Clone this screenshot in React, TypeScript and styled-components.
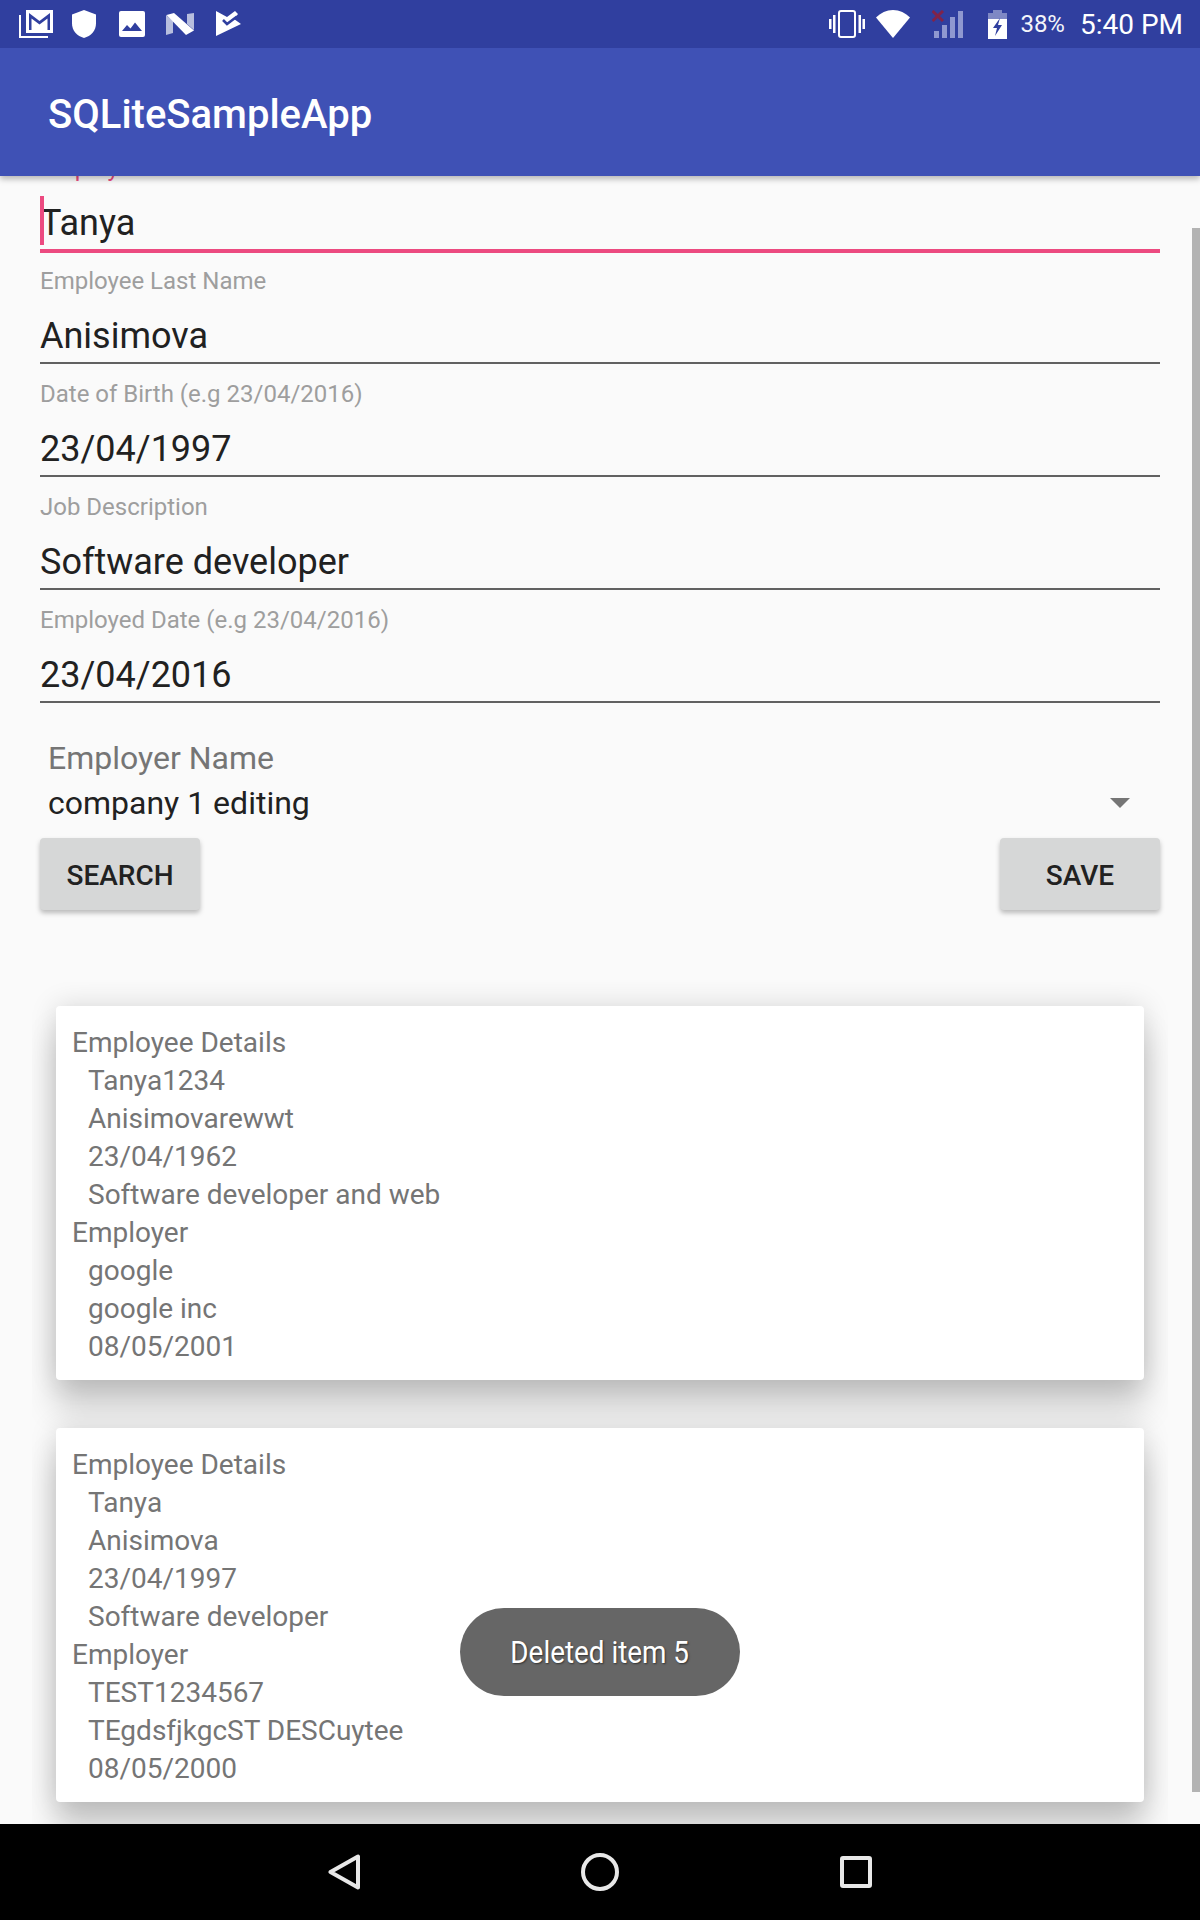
import React from 'react';
import styled, { createGlobalStyle } from 'styled-components';

const GlobalStyle = createGlobalStyle`
  html, body {
    margin: 0;
    padding: 0;
    background: #000;
  }
  * {
    box-sizing: border-box;
  }
`;

const Screen = styled.div`
  width: 1200px;
  height: 1920px;
  display: flex;
  flex-direction: column;
  overflow: hidden;
  font-family: Roboto, "Noto Sans", sans-serif;
  background: #fafafa;
`;

const StatusBar = styled.div`
  flex: 0 0 48px;
  height: 48px;
  display: flex;
  align-items: center;
  justify-content: space-between;
  padding-right: 17px;
  background: #303f9f;
  color: #fff;
  position: relative;
  z-index: 3;
`;

const StatusGroup = styled.div`
  display: flex;
  align-items: center;
`;

const Glyph = styled.svg<{ $left: number }>`
  display: block;
  flex: none;
  margin-left: ${props => props.$left}px;
`;

const BatteryText = styled.span`
  margin-left: 13px;
  font-size: 24px;
  line-height: 48px;
  opacity: 0.95;
`;

const Clock = styled.span`
  margin-left: 15px;
  padding-top: 2px;
  font-size: 28px;
  line-height: 48px;
`;

const AppBar = styled.header`
  flex: 0 0 128px;
  height: 128px;
  display: flex;
  align-items: center;
  padding: 5px 0 0 48px;
  background: #3f51b5;
  box-shadow: 0 3px 6px rgba(0, 0, 0, 0.28);
  position: relative;
  z-index: 2;
`;

const AppTitle = styled.h1`
  margin: 0;
  font-size: 40px;
  font-weight: 500;
  color: #fff;
`;

const ScrollArea = styled.main`
  flex: 1;
  position: relative;
  overflow: hidden;
  background: #fafafa;
`;

const Form = styled.div`
  margin-top: -24px;
  padding: 0 40px;
`;

const Field = styled.div`
  height: 113px;
  display: flex;
  flex-direction: column;
`;

const FieldLabel = styled.label<{ $focused?: boolean }>`
  height: 32px;
  line-height: 32px;
  font-size: 24px;
  color: ${props => (props.$focused ? '#ec4a80' : '#9e9e9e')};
`;

const FieldValue = styled.div`
  height: 54px;
  margin-top: 11px;
  line-height: 56px;
  font-size: 36px;
  color: #212121;
  position: relative;
`;

const Cursor = styled.span`
  position: absolute;
  left: 0;
  top: 1px;
  width: 4px;
  height: 49px;
  background: #ec4a80;
`;

const Underline = styled.div<{ $focused?: boolean }>`
  height: ${props => (props.$focused ? 4 : 2)}px;
  background: ${props => (props.$focused ? '#ec4a80' : '#616161')};
`;

const Spinner = styled.div`
  margin-top: 21px;
  padding: 0 30px 0 8px;
  position: relative;
`;

const SpinnerLabel = styled.div`
  height: 40px;
  line-height: 40px;
  font-size: 32px;
  color: #757575;
`;

const SpinnerValue = styled.div`
  height: 40px;
  margin-top: 5px;
  line-height: 40px;
  font-size: 32px;
  color: #212121;
`;

const Caret = styled.span`
  position: absolute;
  right: 30px;
  bottom: 15px;
  width: 0;
  height: 0;
  border-left: 10px solid transparent;
  border-right: 10px solid transparent;
  border-top: 10px solid #757575;
`;

const ButtonRow = styled.div`
  display: flex;
  justify-content: space-between;
  margin-top: 15px;
`;

const RaisedButton = styled.button`
  width: 160px;
  height: 72px;
  padding: 2px 0 0;
  border: none;
  border-radius: 4px;
  background: #d6d7d7;
  box-shadow: 0 3px 5px rgba(0, 0, 0, 0.26);
  font-family: inherit;
  font-size: 28px;
  font-weight: 500;
  color: #212121;
`;

const CardList = styled.div`
  margin: 72px 32px 0;
  padding: 24px 24px 0;
  height: 900px;
  overflow: hidden;
  display: flex;
  flex-direction: column;
  gap: 48px;
`;

const Card = styled.article`
  flex: none;
  height: 374px;
  padding: 16px;
  background: #fff;
  border-radius: 4px;
  box-shadow: 0 28px 32px rgba(0, 0, 0, 0.19), 0 0 28px rgba(0, 0, 0, 0.14);
`;

const CardLine = styled.div<{ $indent?: boolean }>`
  height: 38px;
  line-height: 42px;
  padding-left: ${props => (props.$indent ? 16 : 0)}px;
  font-size: 28px;
  color: #757575;
`;

const ScrollThumb = styled.div`
  position: absolute;
  top: 52px;
  right: 0;
  width: 8px;
  height: 1564px;
  background: #b3b3b3;
`;

const Toast = styled.div`
  position: absolute;
  left: 460px;
  top: 1432px;
  width: 280px;
  height: 88px;
  display: flex;
  align-items: center;
  justify-content: center;
  border-radius: 44px;
  background: #666;
  color: #fff;
  font-size: 32px;
`;

const ToastText = styled.span`
  display: inline-block;
  transform: scaleX(0.87);
  white-space: nowrap;
  text-shadow: 1px 1px 2px rgba(0, 0, 0, 0.5);
`;

const NavBar = styled.nav`
  flex: 0 0 96px;
  height: 96px;
  display: flex;
  align-items: center;
  justify-content: center;
  background: #000;
  position: relative;
  z-index: 3;
`;

const NavGlyph = styled.svg<{ $left: number }>`
  display: block;
  flex: none;
  margin-left: ${props => props.$left}px;
`;

const employees = [
  {
    details: ['Tanya1234', 'Anisimovarewwt', '23/04/1962', 'Software developer and web'],
    employer: ['google', 'google inc', '08/05/2001'],
  },
  {
    details: ['Tanya', 'Anisimova', '23/04/1997', 'Software developer'],
    employer: ['TEST1234567', 'TEgdsfjkgcST DESCuytee', '08/05/2000'],
  },
];

const fields = [
  { label: 'Employee First Name', value: 'Tanya', focused: true },
  { label: 'Employee Last Name', value: 'Anisimova' },
  { label: 'Date of Birth (e.g 23/04/2016)', value: '23/04/1997' },
  { label: 'Job Description', value: 'Software developer' },
  { label: 'Employed Date (e.g 23/04/2016)', value: '23/04/2016' },
];

const App: React.FC = () => {
  return (
    <Screen>
      <GlobalStyle />
      <StatusBar>
        <StatusGroup>
          {/* mail stack */}
          <Glyph $left={19} width="34" height="28" viewBox="0 0 34 28">
            <path d="M1 5v22h28" fill="none" stroke="#fff" strokeWidth="2" />
            <path d="M7 0h27v23H7z" fill="#fff" />
            <path d="M10 3l10.500 8L31 3v17h-2.500V8.500l-8 6-8-6V20H10z" fill="#303f9f" />
          </Glyph>
          {/* shield */}
          <Glyph $left={19} width="24" height="28" viewBox="0 0 24 28">
            <path d="M12 0L0 4.500v9C0 20.500 5 26 12 28c7-2 12-7.500 12-14.500v-9z" fill="#fff" />
          </Glyph>
          {/* picture */}
          <Glyph $left={23} width="26" height="26" viewBox="0 0 26 26">
            <rect width="26" height="26" rx="2" fill="#fff" />
            <path d="M3 20l5-6 3.500 3.500L16 11.500 23 20z" fill="#303f9f" />
          </Glyph>
          {/* N */}
          <Glyph $left={21} width="28" height="22" viewBox="0 0 28 22">
            <path d="M0 2v20l7-2V8zM21 1l7-1v17l-7-6z" fill="#b7bede" />
            <path d="M0.500 2L8 0l20 17.500L20 22z" fill="#fff" />
          </Glyph>
          {/* check tag */}
          <Glyph $left={22} width="25" height="26" viewBox="0 0 25 26">
            <path d="M0 0l11 6 8-6 3 3-4 5 7 5L0 25z" fill="#fff" />
            <path d="M7 9l4 4 10-7.500" fill="none" stroke="#303f9f" strokeWidth="2.500" />
          </Glyph>
        </StatusGroup>
        <StatusGroup>
          {/* vibrate */}
          <Glyph $left={0} width="36" height="28" viewBox="0 0 36 28">
            <rect x="10" y="1" width="16" height="26" rx="2" fill="none" stroke="#fff" strokeWidth="2" />
            <path d="M0 9h2.500v10H0zM4 5h2.500v18H4zM33.500 9H36v10h-2.500zM29.500 5H32v18h-2.500z" fill="#fff" />
          </Glyph>
          {/* wifi */}
          <Glyph $left={11} width="34" height="28" viewBox="0 0 34 28">
            <path d="M17 28L0 7.500C4.500 3 10.500 0 17 0s12.500 3 17 7.500z" fill="#fff" />
          </Glyph>
          {/* signal with red cross */}
          <Glyph $left={22} width="31" height="29" viewBox="0 0 31 29">
            <path d="M2 21h5v7H2zM10 15h5v13h-5zM18 7h5v21h-5zM26 1h5v27h-5z" fill="#8f98d0" />
            <path d="M0.500 1l10.500 10M11 1L0.500 11" stroke="#80234a" strokeWidth="3" />
          </Glyph>
          {/* charging battery */}
          <Glyph $left={25} width="19" height="29" viewBox="0 0 19 29">
            <path d="M5 0h9v3h5v6H0V3h5z" fill="#7e88c4" />
            <path d="M0 9h19v20H0z" fill="#fff" />
            <path d="M12 8L5 18h4l-2 8 7-11h-4z" fill="#303f9f" />
          </Glyph>
          <BatteryText>38%</BatteryText>
          <Clock>5:40 PM</Clock>
        </StatusGroup>
      </StatusBar>

      <AppBar>
        <AppTitle>SQLiteSampleApp</AppTitle>
      </AppBar>

      <ScrollArea>
        <Form>
          {fields.map(field => (
            <Field key={field.label}>
              <FieldLabel $focused={field.focused}>{field.label}</FieldLabel>
              <FieldValue>
                {field.focused && <Cursor />}
                {field.value}
              </FieldValue>
              <Underline $focused={field.focused} />
            </Field>
          ))}
          <Spinner>
            <SpinnerLabel>Employer Name</SpinnerLabel>
            <SpinnerValue>company 1 editing</SpinnerValue>
            <Caret />
          </Spinner>
          <ButtonRow>
            <RaisedButton>SEARCH</RaisedButton>
            <RaisedButton>SAVE</RaisedButton>
          </ButtonRow>
        </Form>
        <CardList>
          {employees.map(employee => (
            <Card key={employee.details[0]}>
              <CardLine>Employee Details</CardLine>
              {employee.details.map(line => (
                <CardLine $indent key={line}>{line}</CardLine>
              ))}
              <CardLine>Employer</CardLine>
              {employee.employer.map(line => (
                <CardLine $indent key={line}>{line}</CardLine>
              ))}
            </Card>
          ))}
        </CardList>
        <ScrollThumb />
        <Toast>
          <ToastText>Deleted item 5</ToastText>
        </Toast>
      </ScrollArea>

      <NavBar>
        <NavGlyph $left={0} width="32" height="36" viewBox="0 0 32 36">
          <path d="M30 2.500v31L2.500 18z" fill="none" stroke="#e8e8e8" strokeWidth="4" strokeLinejoin="round" />
        </NavGlyph>
        <NavGlyph $left={221} width="38" height="38" viewBox="0 0 38 38">
          <circle cx="19" cy="19" r="17" fill="none" stroke="#e8e8e8" strokeWidth="4" />
        </NavGlyph>
        <NavGlyph $left={221} width="32" height="32" viewBox="0 0 32 32">
          <rect x="2" y="2" width="28" height="28" rx="1" fill="none" stroke="#e8e8e8" strokeWidth="4" />
        </NavGlyph>
      </NavBar>
    </Screen>
  );
};

export default App;
